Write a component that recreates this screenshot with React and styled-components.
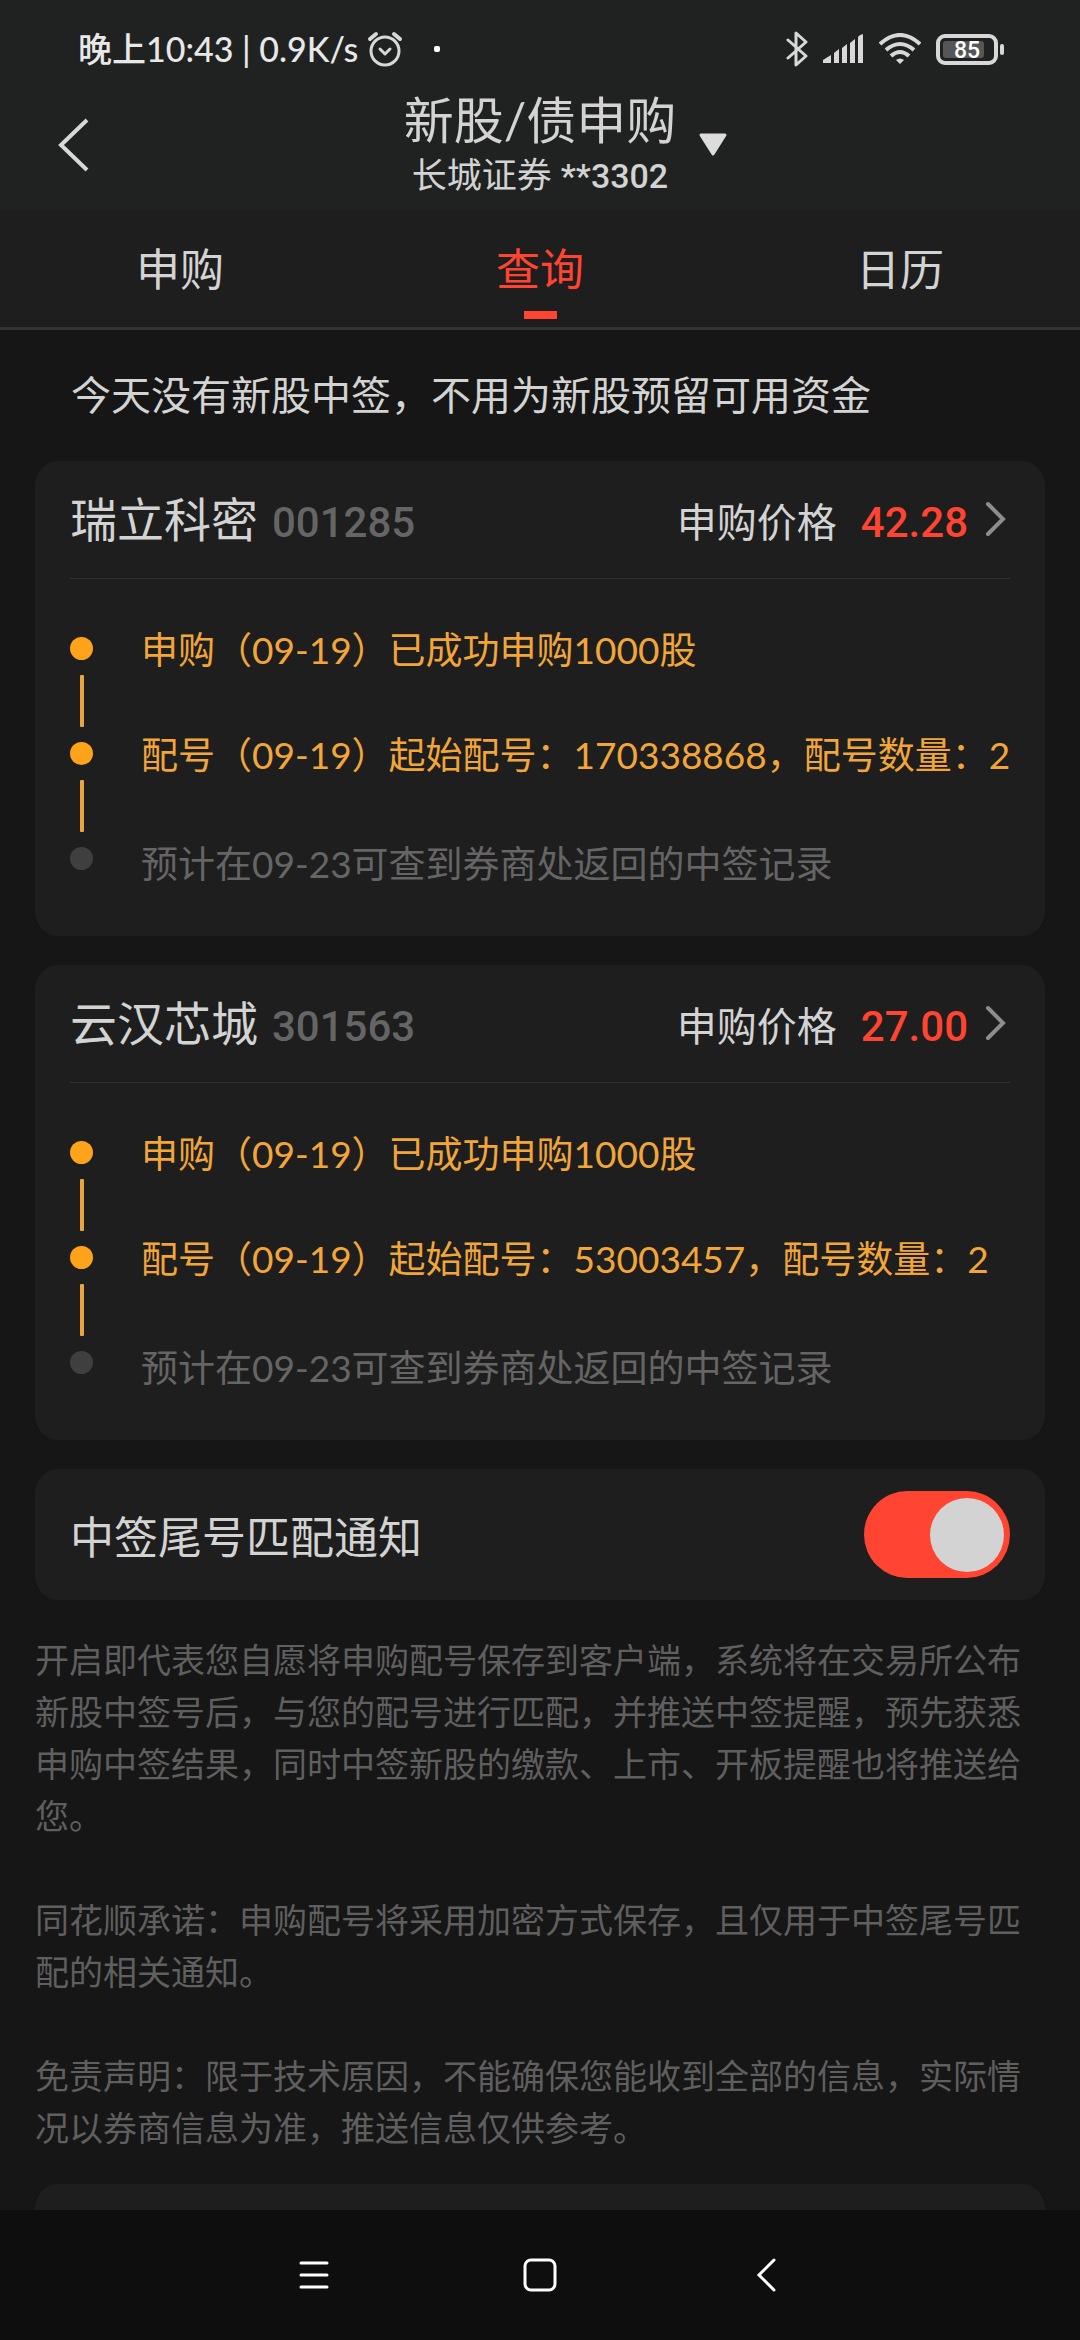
import React, { useState } from "react";
import styled, { createGlobalStyle } from "styled-components";

const GlobalStyle = createGlobalStyle`
  * {
    box-sizing: border-box;
  }

  body {
    margin: 0;
    background: #161616;
    color: #d3d3d3;
    font-family: Lato, "Noto Sans CJK SC", sans-serif;
  }

  button {
    border: 0;
    padding: 0;
    background: none;
    color: inherit;
    font: inherit;
    cursor: pointer;
  }

  svg {
    display: block;
  }
`;

const Screen = styled.div`
  display: flex;
  flex-direction: column;
  height: 100vh;
`;

//  status bar + title
const Top = styled.header`
  background: #202222;
`;

const StatusBar = styled.div`
  display: flex;
  align-items: center;
  justify-content: space-between;
  height: 90px;
  padding: 8px 75px 0 78px;
`;

const StatusGroup = styled.div`
  display: flex;
  align-items: center;
  gap: ${({ $gap }) => $gap}px;
  color: #e8e8e8;
  font-size: 34px;
  line-height: 40px;
  font-weight: 500;
  white-space: pre;
`;

const Dot = styled.span`
  width: 6px;
  height: 6px;
  margin-left: 22px;
  border-radius: 2px;
  background: #fff;
`;

const TitleBar = styled.div`
  display: grid;
  grid-template-columns: 1fr auto 1fr;
  align-items: center;
  height: 120px;
  padding-bottom: 12px;
`;

const BackButton = styled.button`
  justify-self: start;
  padding-left: 56px;
`;

const Titles = styled.div`
  display: flex;
  flex-direction: column;
  align-items: center;
`;

const Title = styled.h1`
  margin: 0;
  font-size: 50px;
  line-height: 60px;
  font-weight: 400;
`;

const Account = styled.p`
  margin: 0;
  font-size: 35px;
  line-height: 48px;
  white-space: nowrap;
`;

const AccountNumber = styled.span`
  font-family: Roboto, sans-serif;
  font-size: 34px;
  font-weight: 500;
`;

const SwitchAccount = styled.button`
  justify-self: start;
  padding-left: 22px;
`;

const Tabs = styled.nav`
  display: flex;
  height: 120px;
  background: #1e1e1e;
  border-bottom: 3px solid #333;
`;

const Tab = styled.button`
  position: relative;
  display: flex;
  flex: 1;
  align-items: center;
  justify-content: center;
  padding-bottom: 4px;
  font-size: 44px;
  color: ${({ $active }) => ($active ? "#ff4532" : "#d3d3d3")};

  & + &::before {
    content: "";
    position: absolute;
    left: 0;
    width: 1px;
    height: 8px;
    background: #2c2c2c;
  }

  &::after {
    content: "";
    display: ${({ $active }) => ($active ? "block" : "none")};
    position: absolute;
    bottom: 8px;
    width: 33px;
    height: 8px;
    background: #ff4532;
  }
`;

const Content = styled.main`
  flex: 1;
  min-height: 0;
  padding: 0 35px;
  overflow-y: auto;
  scrollbar-width: none;
`;

const Notice = styled.p`
  margin: 0;
  padding: 0 36px;
  font-size: 40px;
  line-height: 131px;
`;

const Card = styled.section`
  margin-bottom: 29px;
  padding: 0 35px;
  border-radius: 24px;
  background: #1e1e1e;
`;

const CardHead = styled.div`
  display: flex;
  align-items: baseline;
  justify-content: space-between;
  height: 118px;
  line-height: 116px;
  border-bottom: 1px solid #303030;
`;

const Stock = styled.h2`
  display: flex;
  align-items: baseline;
  gap: 14px;
  margin: 0;
  font-size: 47px;
  font-weight: 400;
`;

const Code = styled.span`
  font-family: Roboto, sans-serif;
  font-size: 42px;
  font-weight: 500;
  color: #656565;
`;

const PriceLink = styled.a`
  display: flex;
  align-items: baseline;
  font-size: 40px;
  color: inherit;
  text-decoration: none;
`;

const Price = styled.strong`
  margin: 0 16px 0 24px;
  font-family: Roboto, sans-serif;
  font-size: 42px;
  font-weight: 500;
  color: #ff4532;
`;

const Steps = styled.ol`
  margin: 0;
  padding: 44px 0 45px;
  list-style: none;
`;

const Step = styled.li`
  display: flex;
  gap: 48px;
  color: ${({ $done }) => ($done ? "#f2a63a" : "#656565")};

  &:not(:last-child) {
    min-height: 105px;
  }

  &:last-child p {
    padding-top: 4px;
  }
`;

const Marker = styled.div`
  display: flex;
  flex-direction: column;
  align-items: center;
  gap: 15px;
  padding-top: 14px;
`;

const Bullet = styled.span`
  width: 23px;
  height: 23px;
  border-radius: 50%;
  background: ${({ $done }) => ($done ? "#ffa31a" : "#3f3f3f")};
`;

const Line = styled.span`
  width: 4px;
  height: 52px;
  border-radius: 1px;
  background: #eba540;
`;

const StepText = styled.p`
  margin: 0;
  font-size: 37px;
  line-height: 54px;
  white-space: nowrap;
`;

const NotifyRow = styled.label`
  display: flex;
  align-items: center;
  justify-content: space-between;
  height: 131px;
  font-size: 44px;
`;

const Toggle = styled.input`
  display: flex;
  align-items: center;
  appearance: none;
  width: 146px;
  height: 87px;
  margin: 0;
  padding: 6px;
  border-radius: 44px;
  background: #4a4a4a;
  cursor: pointer;

  &::before {
    content: "";
    width: 74px;
    height: 74px;
    border-radius: 50%;
    background: #d3d3d3;
  }

  &:checked {
    justify-content: flex-end;
    background: #ff4532;
  }
`;

const Terms = styled.div`
  padding: 5px 0 30px;
  font-size: 34px;
  line-height: 52px;
  color: #5f5f5f;

  p {
    margin: 0;
  }

  p + p {
    margin-top: 52px;
  }
`;

const NextCard = styled(Card)`
  height: 131px;
`;

const SystemNav = styled.footer`
  display: flex;
  align-items: center;
  justify-content: center;
  height: 130px;
  background: #0e0e0e;
`;

const NavButton = styled.button`
  display: flex;
  align-items: center;
  justify-content: center;
  width: 226px;
  height: 100%;
`;

const AlarmIcon = () => (
  <svg width="36" height="36" viewBox="0 0 36 36" fill="none" stroke="#d8d8d8" strokeWidth="3" strokeLinecap="round">
    <circle cx="18" cy="20" r="14" />
    <path d="M13 18l5 5 5-5" strokeLinejoin="round" />
    <path d="M3 8l6-5M33 8l-6-5" strokeWidth="4" />
  </svg>
);

const BluetoothIcon = () => (
  <svg width="22" height="36" viewBox="0 0 22 36" fill="none" stroke="#d8d8d8" strokeWidth="3">
    <path d="M2 9l18 16-10 9V2l10 9L2 27" strokeLinejoin="round" strokeLinecap="round" />
  </svg>
);

const SignalIcon = () => (
  <svg width="41" height="30" viewBox="0 0 41 30" fill="#d8d8d8">
    <path d="M0 29v-3l8-5v8z" />
    <path d="M11 29V19l5-4v14z" />
    <path d="M19 29V14l5-4v19z" />
    <path d="M27 29V9l5-4v24z" />
    <path d="M35 29V3q1-2 5-3v29z" />
  </svg>
);

const WifiIcon = () => (
  <svg width="42" height="32" viewBox="0 0 42 32" fill="none" stroke="#d8d8d8" strokeWidth="4">
    <path d="M1 11Q21-7 41 11" />
    <path d="M7 17q14-12 28 0" />
    <path d="M12 23q9-8 18 0" />
    <path d="M17 27q4-3 8 0l-4 4z" fill="#d8d8d8" stroke="none" />
  </svg>
);

const BatteryIcon = () => (
  <svg width="69" height="31" viewBox="0 0 69 31">
    <rect x="2" y="2" width="58" height="27" rx="7" fill="none" stroke="#d8d8d8" strokeWidth="4" />
    <rect x="7" y="7" width="41" height="17" rx="3" fill="#555656" />
    <rect x="64" y="10" width="4" height="11" rx="2" fill="#d8d8d8" />
    <text x="31" y="24" textAnchor="middle" fontFamily="Roboto, sans-serif" fontSize="23" fontWeight="500" fill="#fff">
      85
    </text>
  </svg>
);

const stocks = [
  {
    name: "瑞立科密",
    code: "001285",
    price: "42.28",
    steps: [
      { text: "申购（09-19）已成功申购1000股", done: true },
      { text: "配号（09-19）起始配号：170338868，配号数量：2", done: true },
      { text: "预计在09-23可查到券商处返回的中签记录", done: false },
    ],
  },
  {
    name: "云汉芯城",
    code: "301563",
    price: "27.00",
    steps: [
      { text: "申购（09-19）已成功申购1000股", done: true },
      { text: "配号（09-19）起始配号：53003457，配号数量：2", done: true },
      { text: "预计在09-23可查到券商处返回的中签记录", done: false },
    ],
  },
];

const StockCard = ({ stock }) => (
  <Card>
    <CardHead>
      <Stock>
        {stock.name}
        <Code>{stock.code}</Code>
      </Stock>
      <PriceLink href={`#${stock.code}`}>
        申购价格
        <Price>{stock.price}</Price>
        <svg width="26" height="36" viewBox="0 0 26 36" fill="none" stroke="#8d8d8d" strokeWidth="4">
          <path d="M4 3l15 15L4 33" strokeLinecap="round" />
        </svg>
      </PriceLink>
    </CardHead>
    <Steps>
      {stock.steps.map((step, i) => (
        <Step key={step.text} $done={step.done}>
          <Marker>
            <Bullet $done={step.done} />
            {i < stock.steps.length - 1 && <Line />}
          </Marker>
          <StepText>{step.text}</StepText>
        </Step>
      ))}
    </Steps>
  </Card>
);

const App = () => {
  const [tab, setTab] = useState("查询");
  const [notify, setNotify] = useState(true);

  return (
    <Screen>
      <GlobalStyle />
      <Top>
        <StatusBar>
          <StatusGroup $gap={9}>
            <span>晚上10:43 | 0.9K/s</span>
            <AlarmIcon />
            <Dot />
          </StatusGroup>
          <StatusGroup $gap={15}>
            <BluetoothIcon />
            <SignalIcon />
            <WifiIcon />
            <BatteryIcon />
          </StatusGroup>
        </StatusBar>
        <TitleBar>
          <BackButton aria-label="返回">
            <svg width="36" height="56" viewBox="0 0 36 56" fill="none" stroke="#d8d8d8" strokeWidth="4">
              <path d="M31 3L5 28l26 25" />
            </svg>
          </BackButton>
          <Titles>
            <Title>新股/债申购</Title>
            <Account>
              长城证券 <AccountNumber>**3302</AccountNumber>
            </Account>
          </Titles>
          <SwitchAccount aria-label="切换账户">
            <svg width="30" height="24" viewBox="0 0 30 24" fill="#dcdcdc" stroke="#dcdcdc" strokeWidth="3">
              <path d="M3 2h24L15 21z" strokeLinejoin="round" />
            </svg>
          </SwitchAccount>
        </TitleBar>
      </Top>
      <Tabs>
        {["申购", "查询", "日历"].map((name) => (
          <Tab key={name} $active={name === tab} onClick={() => setTab(name)}>
            {name}
          </Tab>
        ))}
      </Tabs>
      <Content>
        <Notice>今天没有新股中签，不用为新股预留可用资金</Notice>
        {stocks.map((stock) => (
          <StockCard key={stock.code} stock={stock} />
        ))}
        <Card>
          <NotifyRow>
            中签尾号匹配通知
            <Toggle
              type="checkbox"
              role="switch"
              checked={notify}
              onChange={(e) => setNotify(e.target.checked)}
            />
          </NotifyRow>
        </Card>
        <Terms>
          <p>
            开启即代表您自愿将申购配号保存到客户端，系统将在交易所公布新股中签号后，与您的配号进行匹配，并推送中签提醒，预先获悉申购中签结果，同时中签新股的缴款、上市、开板提醒也将推送给您。
          </p>
          <p>同花顺承诺：申购配号将采用加密方式保存，且仅用于中签尾号匹配的相关通知。</p>
          <p>免责声明：限于技术原因，不能确保您能收到全部的信息，实际情况以券商信息为准，推送信息仅供参考。</p>
        </Terms>
        <NextCard />
      </Content>
      <SystemNav>
        <NavButton aria-label="最近任务">
          <svg width="30" height="30" viewBox="0 0 30 30" stroke="#fff" strokeWidth="3" strokeLinecap="round">
            <path d="M2 3h26M2 15h26M2 27h26" />
          </svg>
        </NavButton>
        <NavButton aria-label="主屏幕">
          <svg width="34" height="34" viewBox="0 0 34 34" fill="none" stroke="#fff" strokeWidth="3">
            <rect x="2" y="2" width="30" height="30" rx="6" />
          </svg>
        </NavButton>
        <NavButton aria-label="返回上一页">
          <svg width="20" height="34" viewBox="0 0 20 34" fill="none" stroke="#fff" strokeWidth="3">
            <path d="M18 2L3 17l15 15" strokeLinecap="round" />
          </svg>
        </NavButton>
      </SystemNav>
    </Screen>
  );
};

export default App;
